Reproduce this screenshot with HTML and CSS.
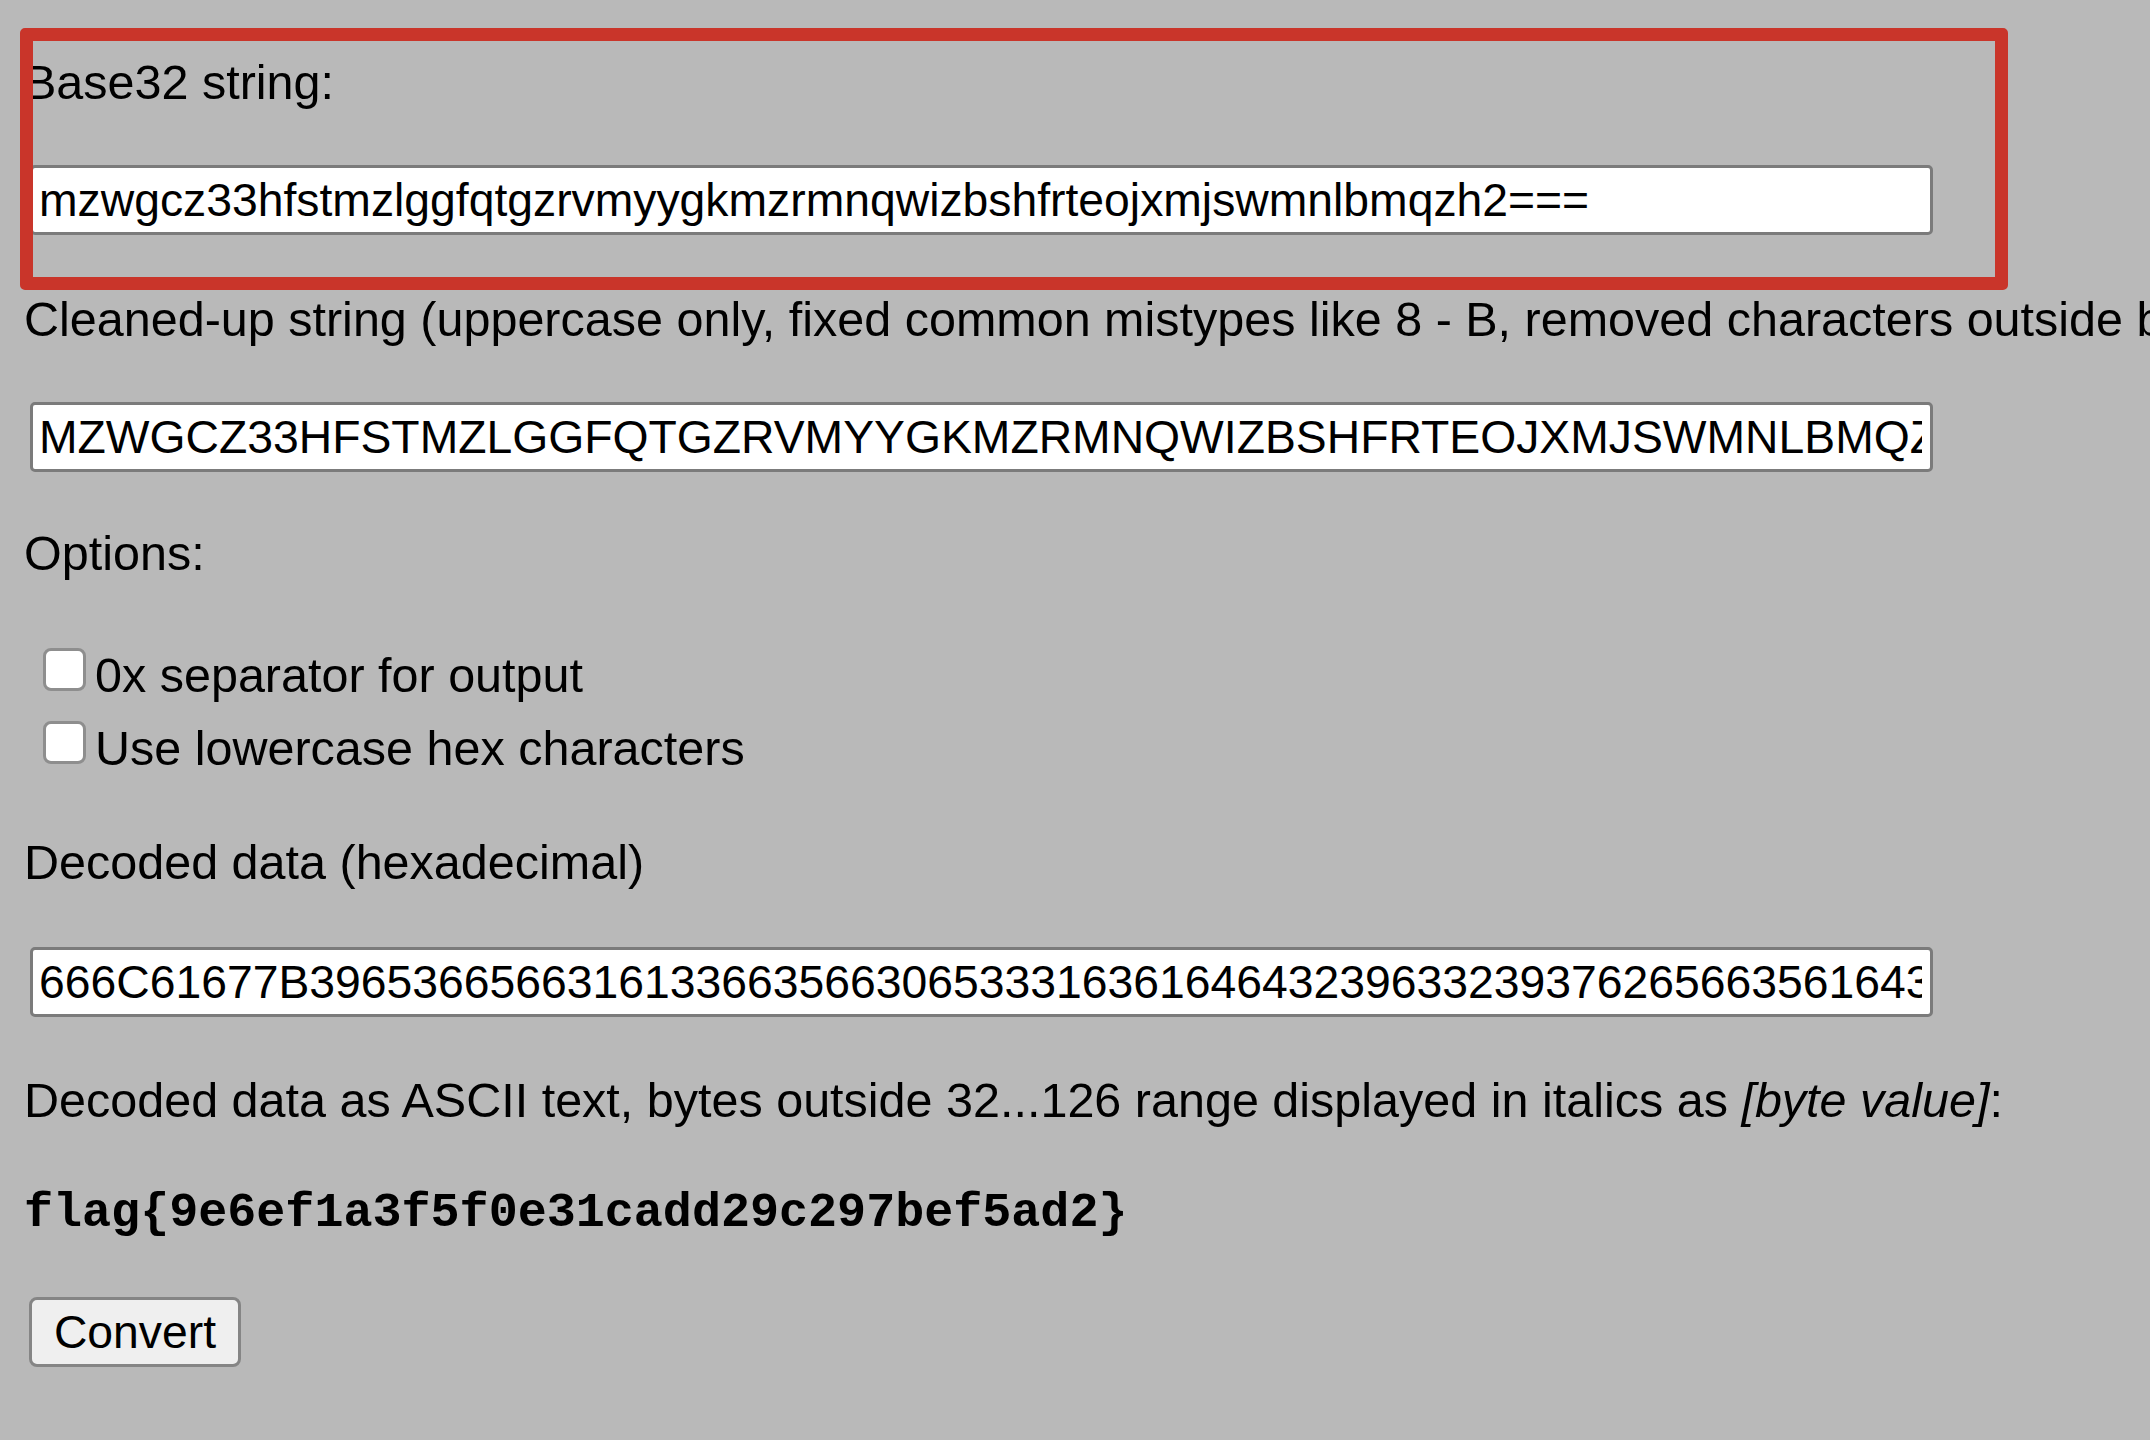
FILE: index.html
```html
<!DOCTYPE html>
<html lang="en">
<head>
<meta charset="utf-8">
<title>Base32 to hex</title>
<link rel="stylesheet" href="styles.css">
</head>
<body>
<main class="form">
  <p class="label l1">Base32 string:</p>
  <input class="field f1" type="text" value="mzwgcz33hfstmzlggfqtgzrvmyygkmzrmnqwizbshfrteojxmjswmnlbmqzh2===">
  <p class="label l2">Cleaned-up string (uppercase only, fixed common mistypes like 8 - B, removed characters outside base32 alphabet):</p>
  <input class="field f2" type="text" value="MZWGCZ33HFSTMZLGGFQTGZRVMYYGKMZRMNQWIZBSHFRTEOJXMJSWMNLBMQZH2">
  <p class="label opt">Options:</p>
  <label class="check c1"><input class="box" type="checkbox"><span>0x separator for output</span></label>
  <label class="check c2"><input class="box" type="checkbox"><span>Use lowercase hex characters</span></label>
  <p class="label l3">Decoded data (hexadecimal)</p>
  <input class="field f3" type="text" value="666C61677B39653665663161336635663065333163616464323963323937626566356164327D">
  <p class="label l4">Decoded data as ASCII text, bytes outside 32...126 range displayed in italics as <i>[byte value]</i>:</p>
  <p class="flag">flag{9e6ef1a3f5f0e31cadd29c297bef5ad2}</p>
  <button class="btn" type="button">Convert</button>
</main>
<div class="mark"></div>
</body>
</html>
```
FILE: styles.css
```css
html, body {
  margin: 0;
  padding: 0;
  overflow: hidden;
  background: #b9b9b9;
}
body {
  position: relative;
  height: 1440px;
  font-family: "Liberation Sans", Arial, Helvetica, sans-serif;
  font-size: 48.5px;
  color: #000;
}
.form {
  display: flex;
  flex-direction: column;
  align-items: flex-start;
  padding-left: 24px;
  white-space: nowrap;
}
.label {
  margin: 0;
  height: 56px;
  line-height: 56px;
}
.label i { font-style: italic; }
.field {
  box-sizing: border-box;
  width: 1903px;
  height: 70px;
  margin: 0 0 0 6px;
  padding: 0 8px 0 6px;
  border: 3px solid #7b7b7b;
  border-radius: 5px;
  background: #fff;
  color: #000;
  font-family: "Liberation Sans", Arial, Helvetica, sans-serif;
  font-size: 46.3px;
  outline: none;
}
.l1 { margin-top: 54px; }
.f1 { margin-top: 55px; }
.l2 { margin-top: 56px; }
.f2 { margin-top: 55px; }
.opt { margin-top: 53px; }
.check {
  display: flex;
  align-items: flex-start;
  height: 73px;
  line-height: 56px;
}
.c1 { margin-top: 66px; }
.box {
  -webkit-appearance: none;
  appearance: none;
  box-sizing: border-box;
  width: 43px;
  height: 43px;
  margin: 1px 9px 0 19px;
  border: 3px solid #8e8e8e;
  border-radius: 8px;
  background: #fff;
  flex: none;
}
.l3 { margin-top: 41px; }
.f3 { margin-top: 57px; }
.l4 { margin-top: 55px; }
.flag {
  margin: 58px 0 0 0;
  height: 56px;
  line-height: 56px;
  font-family: "Liberation Mono", "Courier New", monospace;
  font-weight: bold;
  font-size: 48.4px;
}
.btn {
  box-sizing: border-box;
  width: 212px;
  height: 70px;
  margin: 55px 0 0 5px;
  padding: 0;
  border: 3px solid #858585;
  border-radius: 8px;
  background: #efefef;
  color: #000;
  font-family: "Liberation Sans", Arial, Helvetica, sans-serif;
  font-size: 46.3px;
  text-align: center;
}
.mark {
  position: absolute;
  left: 20px;
  top: 28px;
  width: 1988px;
  height: 262px;
  box-sizing: border-box;
  border: 13px solid #c9352a;
  border-radius: 5px;
  pointer-events: none;
}
```
